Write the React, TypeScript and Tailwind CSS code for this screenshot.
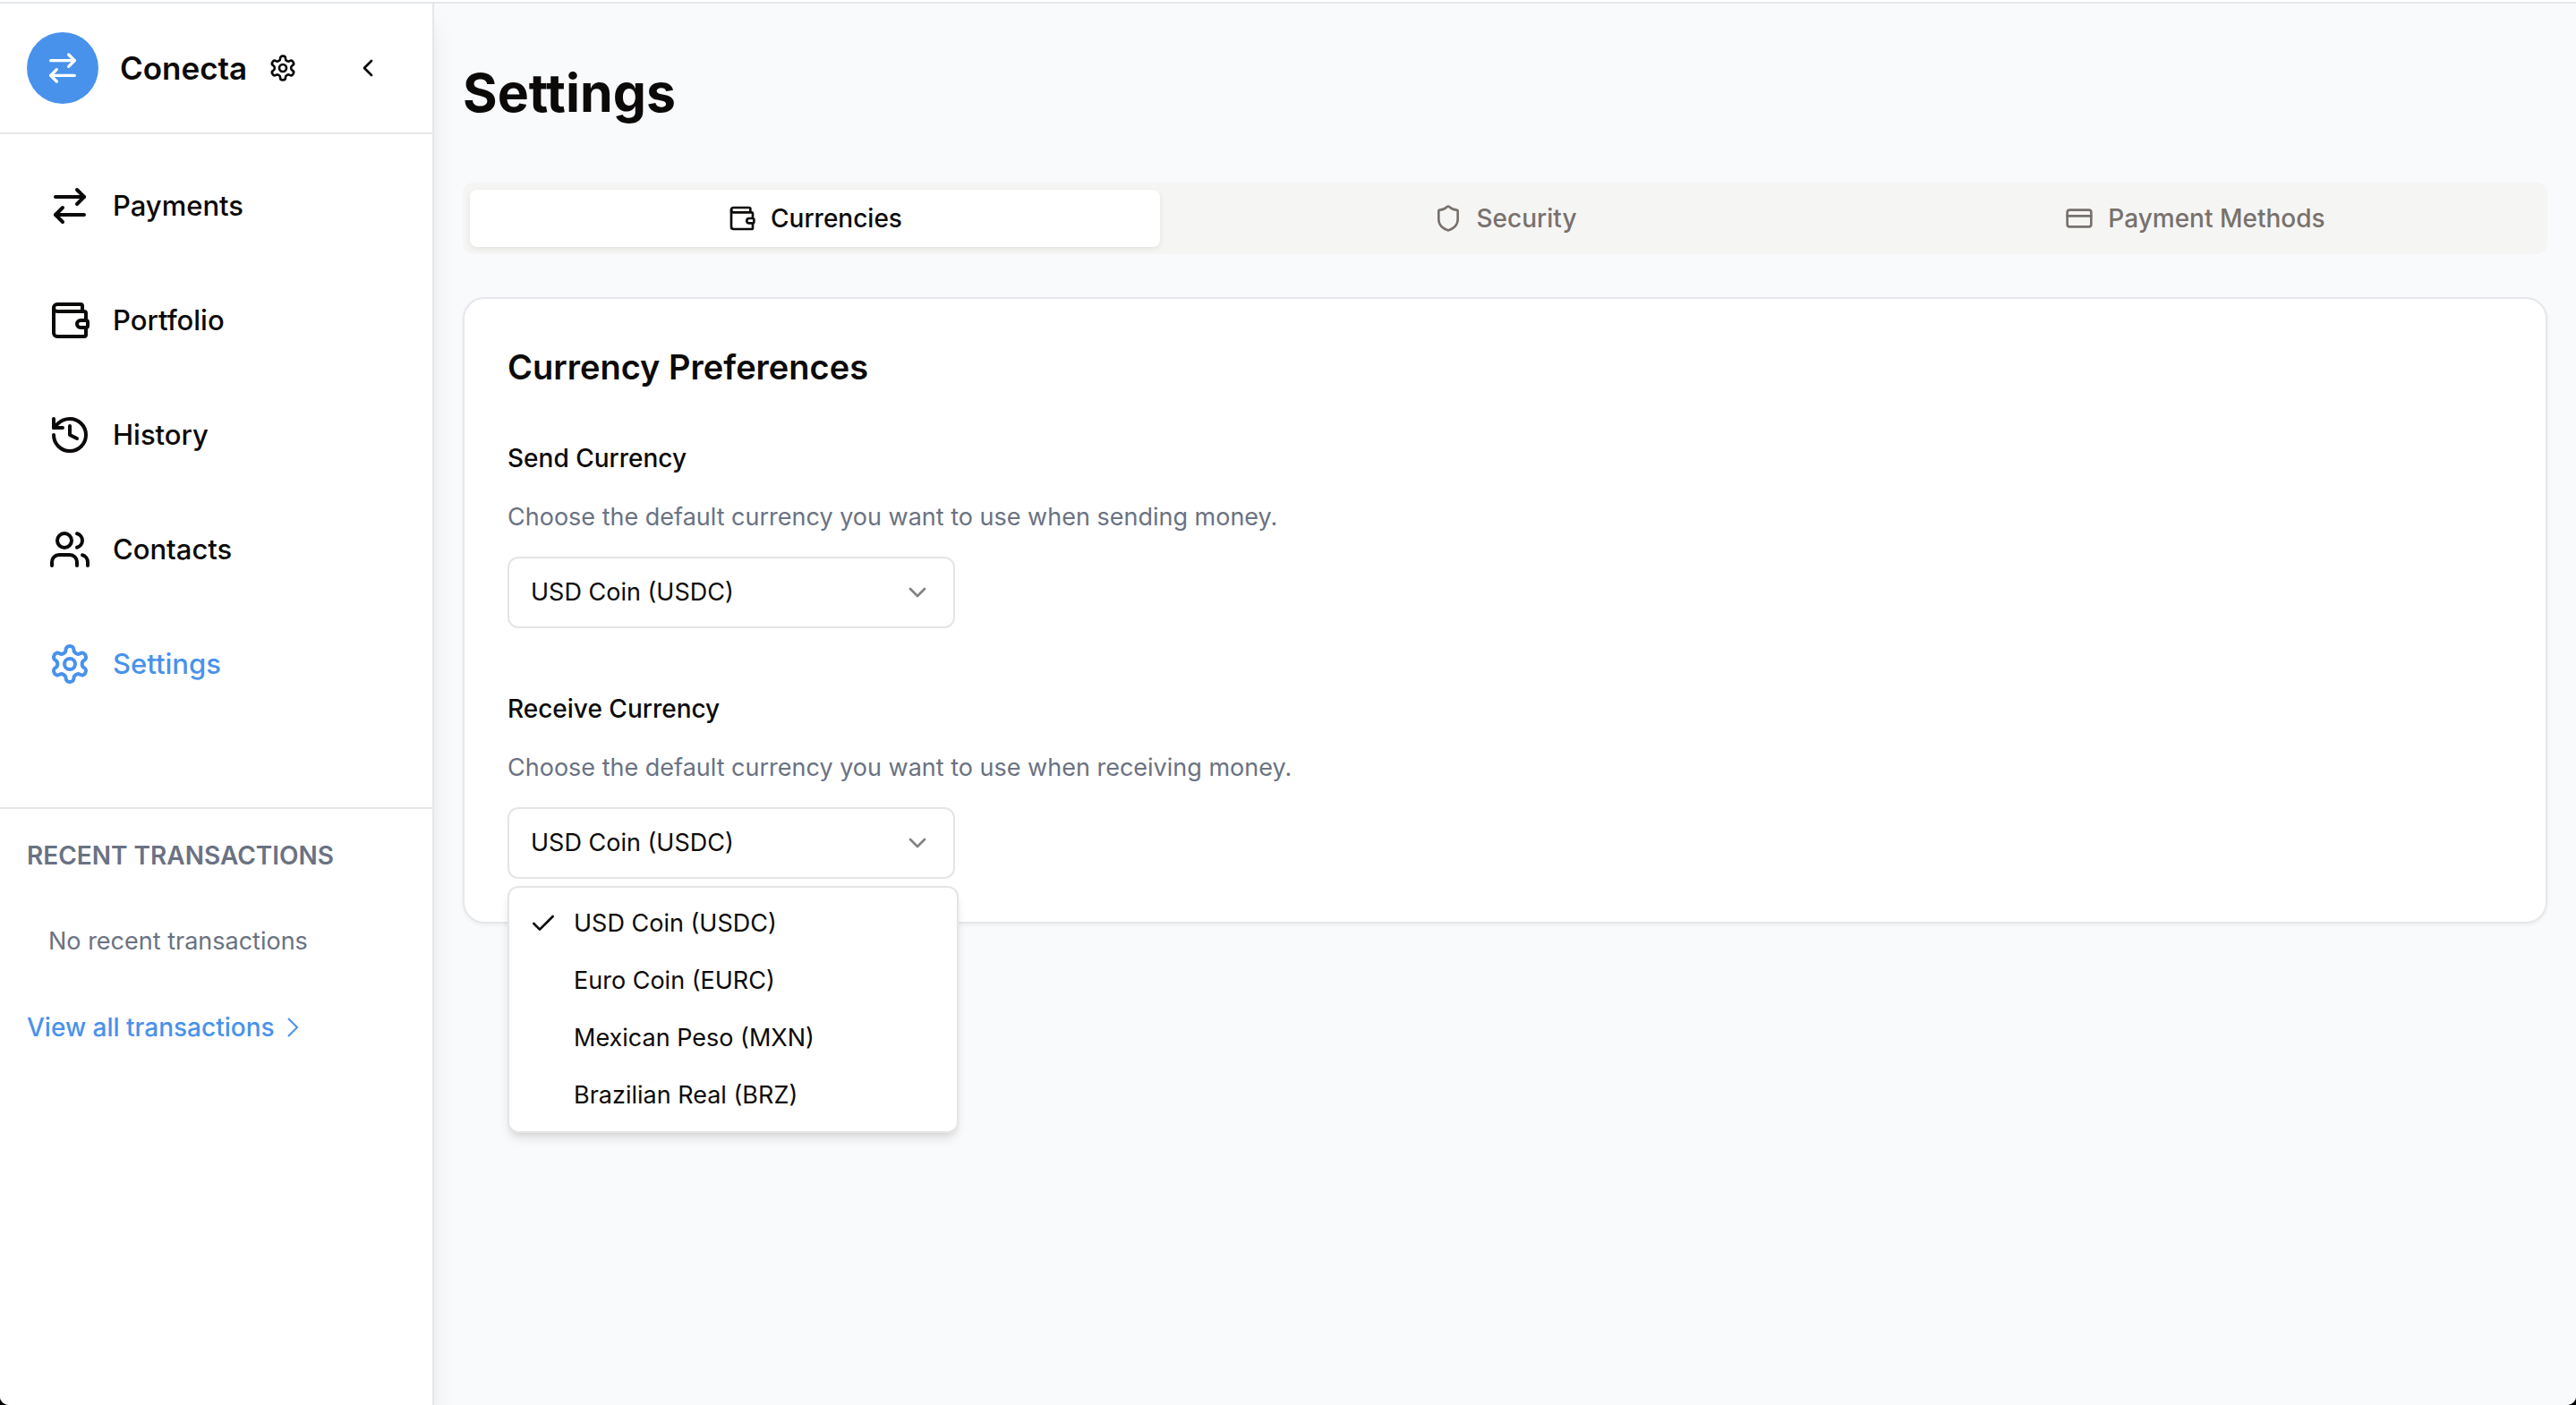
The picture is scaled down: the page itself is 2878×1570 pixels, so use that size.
import { useState } from "react";
import type { ReactNode } from "react";
import {
  ArrowRightLeft,
  Check,
  ChevronDown,
  ChevronLeft,
  CreditCard,
  History,
  Shield,
  Users,
  Wallet,
} from "lucide-react";

const CURRENCIES = [
  "USD Coin (USDC)",
  "Euro Coin (EURC)",
  "Mexican Peso (MXN)",
  "Brazilian Real (BRZ)",
];

function GearIcon({ className }: { className: string }) {
  return (
    <svg
      className={className}
      viewBox="0 0 24 24"
      fill="none"
      stroke="currentColor"
      strokeWidth={2}
      strokeLinecap="round"
      strokeLinejoin="round"
      aria-hidden="true"
    >
      <path d="M12.22 2h-.44a2 2 0 0 0-2 2v.18a2 2 0 0 1-1 1.73l-.43.25a2 2 0 0 1-2 0l-.15-.08a2 2 0 0 0-2.73.73l-.22.38a2 2 0 0 0 .73 2.73l.15.1a2 2 0 0 1 1 1.72v.51a2 2 0 0 1-1 1.74l-.15.09a2 2 0 0 0-.73 2.73l.22.38a2 2 0 0 0 2.73.73l.15-.08a2 2 0 0 1 2 0l.43.25a2 2 0 0 1 1 1.73V20a2 2 0 0 0 2 2h.44a2 2 0 0 0 2-2v-.18a2 2 0 0 1 1-1.73l.43-.25a2 2 0 0 1 2 0l.15.08a2 2 0 0 0 2.73-.73l.22-.39a2 2 0 0 0-.73-2.73l-.15-.08a2 2 0 0 1-1-1.74v-.5a2 2 0 0 1 1-1.74l.15-.09a2 2 0 0 0 .73-2.73l-.22-.38a2 2 0 0 0-2.73-.73l-.15.08a2 2 0 0 1-2 0l-.43-.25a2 2 0 0 1-1-1.73V4a2 2 0 0 0-2-2z" />
      <circle cx="12" cy="12" r="3" />
    </svg>
  );
}

function ThinChevronRight({ className }: { className: string }) {
  return (
    <svg
      className={className}
      viewBox="0 0 24 24"
      fill="none"
      stroke="currentColor"
      strokeWidth={1.5}
      aria-hidden="true"
    >
      <path d="m8.25 4.5 7.5 7.5-7.5 7.5" />
    </svg>
  );
}

function NavItem({
  icon,
  label,
  active = false,
}: {
  icon: ReactNode;
  label: string;
  active?: boolean;
}) {
  return (
    <a
      href="#"
      aria-current={active ? "page" : undefined}
      className={
        active
          ? "flex h-24 items-center gap-6 px-6 text-[31px] font-medium text-[#4892ec]"
          : "flex h-24 items-center gap-6 px-6 text-[31px] font-medium text-[#0c0a09]"
      }
    >
      {icon}
      {label}
    </a>
  );
}

function Sidebar() {
  return (
    <aside className="relative flex w-[485px] shrink-0 flex-col border-r-2 border-gray-200 bg-white shadow-[0_20px_30px_-6px_rgb(0_0_0/0.1),0_8px_12px_-8px_rgb(0_0_0/0.1)]">
      <div className="flex items-center border-b-2 border-gray-200 py-8 pr-10 pl-[30px]">
        <span className="flex size-20 items-center justify-center rounded-full bg-[#4892ec] text-white">
          <ArrowRightLeft className="size-10" />
        </span>
        <span className="ml-6 text-[35px] font-semibold">Conecta</span>
        <button type="button" aria-label="Preferences" className="ml-6">
          <GearIcon className="size-8" />
        </button>
        <button
          type="button"
          aria-label="Collapse sidebar"
          className="ml-auto flex size-16 items-center justify-center"
        >
          <ChevronLeft className="size-8" />
        </button>
      </div>
      <nav className="flex flex-col gap-8 px-[30px] pt-8 pb-28">
        <NavItem icon={<ArrowRightLeft className="size-12" />} label="Payments" />
        <NavItem icon={<Wallet className="size-12" />} label="Portfolio" />
        <NavItem icon={<History className="size-12" />} label="History" />
        <NavItem icon={<Users className="size-12" />} label="Contacts" />
        <NavItem icon={<GearIcon className="size-12" />} label="Settings" active />
      </nav>
      <section className="flex flex-col items-start gap-14 border-t-2 border-gray-200 px-[30px] pt-8 text-[28px] leading-10 text-gray-500">
        <h2 className="font-semibold uppercase">Recent Transactions</h2>
        <p className="px-6 text-[27px]">No recent transactions</p>
        <a href="#" className="flex items-center gap-1 font-medium text-[#4892ec]">
          View all transactions
          <ThinChevronRight className="size-8" />
        </a>
      </section>
    </aside>
  );
}

function Tab({
  icon,
  label,
  selected,
  onSelect,
}: {
  icon: ReactNode;
  label: string;
  selected: boolean;
  onSelect: () => void;
}) {
  return (
    <button
      type="button"
      role="tab"
      aria-selected={selected}
      onClick={onSelect}
      className={
        selected
          ? "flex h-16 items-center justify-center gap-4 rounded-lg bg-white text-[28px] font-medium text-[#0c0a09] shadow-[0_2px_6px_rgb(0_0_0/0.08)]"
          : "flex h-16 items-center justify-center gap-4 rounded-lg text-[28px] font-medium text-[#78716c]"
      }
    >
      {icon}
      {label}
    </button>
  );
}

function CurrencyMenu({ value }: { value: string }) {
  return (
    <ul
      role="listbox"
      aria-label="Receive currency options"
      className="absolute top-full left-0 mt-2 w-[504px] rounded-xl border-2 border-[#e7e5e4] bg-white p-2 shadow-[0_8px_12px_-2px_rgb(0_0_0/0.1),0_4px_8px_-4px_rgb(0_0_0/0.1)]"
    >
      {CURRENCIES.map((currency) => (
        <li
          key={currency}
          role="option"
          aria-selected={currency === value}
          className="flex h-16 items-center gap-[18px] pl-3.5"
        >
          <span className="flex size-8 items-center">
            {currency === value && <Check className="size-8" />}
          </span>
          {currency}
        </li>
      ))}
    </ul>
  );
}

function CurrencyField({
  id,
  label,
  hint,
  open = false,
}: {
  id: string;
  label: string;
  hint: string;
  open?: boolean;
}) {
  const [value, setValue] = useState(CURRENCIES[0]);
  return (
    <div className="flex flex-col items-start text-[27px]">
      <label htmlFor={id} className="text-[28px] leading-7 font-medium">
        {label}
      </label>
      <p id={`${id}-hint`} className="mt-8 leading-10 text-gray-500">
        {hint}
      </p>
      <div className="relative mt-6 w-[500px]">
        <select
          id={id}
          aria-describedby={`${id}-hint`}
          value={value}
          onChange={(event) => setValue(event.target.value)}
          className="block h-20 w-full appearance-none rounded-xl border-2 border-[#e5e5e5] bg-white px-6 outline-none"
        >
          {CURRENCIES.map((currency) => (
            <option key={currency}>{currency}</option>
          ))}
        </select>
        <ChevronDown className="pointer-events-none absolute top-6 right-[26px] size-8 opacity-50" />
        {open && <CurrencyMenu value={value} />}
      </div>
    </div>
  );
}

export default function App() {
  const [tab, setTab] = useState("Currencies");
  const tabs = [
    { label: "Currencies", icon: <Wallet className="size-8" /> },
    { label: "Security", icon: <Shield className="size-8" /> },
    { label: "Payment Methods", icon: <CreditCard className="size-8" /> },
  ];
  return (
    <div className="min-h-screen bg-black font-['Inter',sans-serif] text-[#0c0a09]">
      <div className="flex min-h-screen flex-col overflow-hidden rounded-b-[10px] bg-white pt-0.5">
        <div className="flex grow overflow-hidden border-t-2 border-gray-200 bg-[#f9fafc]">
          <Sidebar />
          <main className="min-w-0 grow px-8 py-16">
            <h1 className="text-[59px] leading-[72px] font-bold">Settings</h1>
            <div role="tablist" className="mt-16 grid grid-cols-3 rounded-xl bg-[#f5f5f4] p-2">
              {tabs.map(({ label, icon }) => (
                <Tab
                  key={label}
                  icon={icon}
                  label={label}
                  selected={tab === label}
                  onSelect={() => setTab(label)}
                />
              ))}
            </div>
            <section className="mt-12 rounded-3xl border-2 border-gray-200 bg-white p-12 shadow-[0_2px_4px_rgb(0_0_0/0.05)]">
              <h2 className="text-[38px] leading-14 font-semibold">Currency Preferences</h2>
              <div className="mt-15 flex flex-col gap-19">
                <CurrencyField
                  id="send-currency"
                  label="Send Currency"
                  hint="Choose the default currency you want to use when sending money."
                />
                <CurrencyField
                  id="receive-currency"
                  label="Receive Currency"
                  hint="Choose the default currency you want to use when receiving money."
                  open
                />
              </div>
            </section>
          </main>
        </div>
      </div>
    </div>
  );
}
